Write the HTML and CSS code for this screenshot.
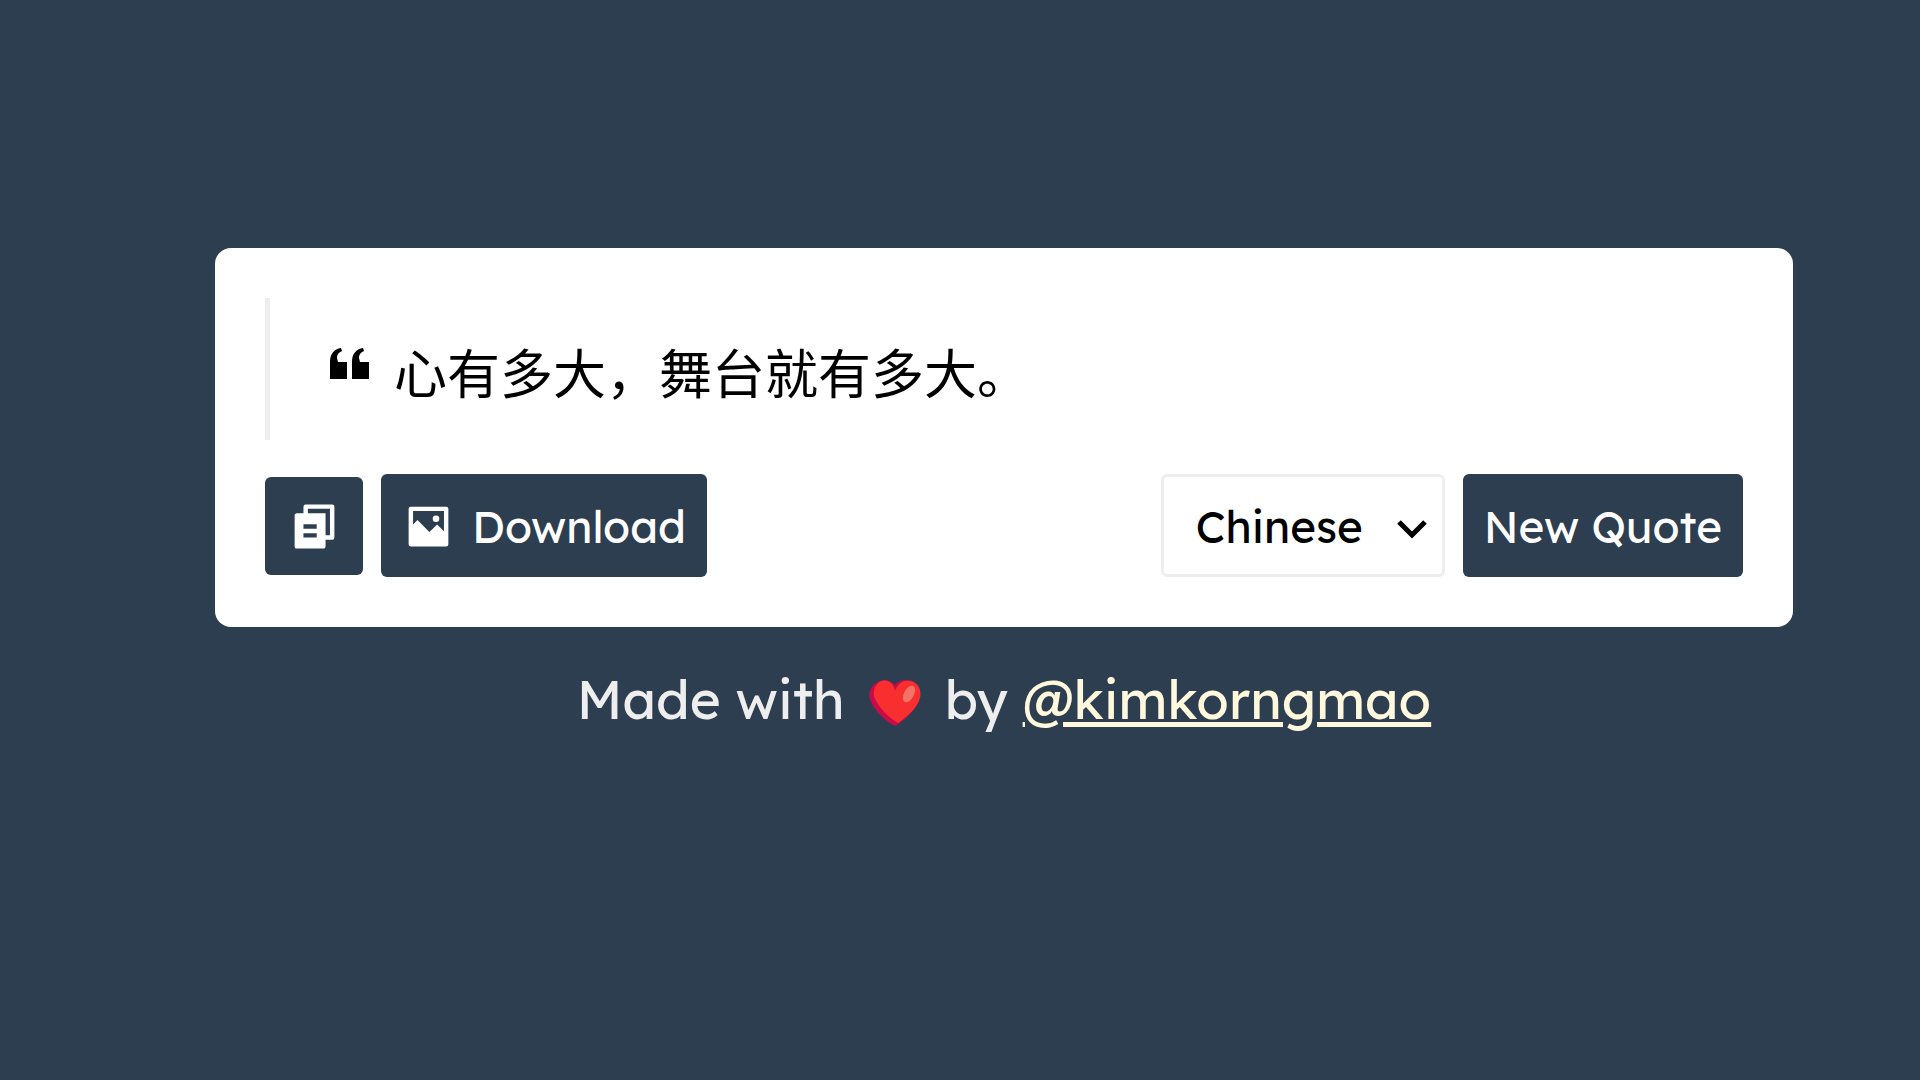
FILE: index.html
```html
<!DOCTYPE html>
<html lang="en">
<head>
  <meta charset="utf-8">
  <meta name="viewport" content="width=device-width, initial-scale=1">
  <title>Quotes</title>
  <link rel="stylesheet" href="styles.css">
</head>
<body>
  <main class="card">
    <blockquote class="quote">
      <svg class="quote-mark" viewBox="0 0 39 31" aria-hidden="true">
        <path d="M0 31V14C0 6 4 1 11 0L12 3C8 5 7 7 7 10L8 14H17V31ZM22 31V14C22 6 26 1 33 0L34 3C30 5 29 7 29 10L30 14H39V31Z"/>
      </svg>
      <p class="quote-text" lang="zh-Hans">心有多大，舞台就有多大。</p>
    </blockquote>
    <div class="toolbar">
      <div class="group">
        <button class="button button-icon" type="button" aria-label="Copy">
          <svg class="icon" viewBox="0 0 24 24" aria-hidden="true">
            <path d="M7 6V3a1 1 0 0 1 1-1h12a1 1 0 0 1 1 1v14a1 1 0 0 1-1 1h-3v3c0 .552-.45 1-1.007 1H4.007A1 1 0 0 1 3 21l.003-14c0-.552.45-1 1.007-1H7zm2 0h8v10h2V4H9v2zm-2 5v2h6v-2H7zm0 4v2h6v-2H7z"/>
          </svg>
        </button>
        <button class="button" type="button">
          <svg class="icon" viewBox="0 0 24 24" aria-hidden="true">
            <path fill-rule="evenodd" d="M4 3h16a1 1 0 0 1 1 1v16a1 1 0 0 1-1 1H4a1 1 0 0 1-1-1V4a1 1 0 0 1 1-1zM5 5v6.1l2-2 5.4 5.4 3.5-3.4 3.1 3V5H5z"/>
            <circle cx="15.4" cy="8.5" r="1.5"/>
          </svg>
          <span>Download</span>
        </button>
      </div>
      <div class="group">
        <div class="picker">
          <select class="picker-select" aria-label="Language">
            <option selected>Chinese</option>
            <option>English</option>
          </select>
          <svg class="picker-arrow" viewBox="0 0 30 19" aria-hidden="true">
            <path d="M2 2L15 15L28 2"/>
          </svg>
        </div>
        <button class="button" type="button">New Quote</button>
      </div>
    </div>
  </main>
  <footer class="footer">
    <span>Made with</span>
    <svg class="heart" viewBox="0 0 52 46" role="img" aria-label="love">
      <path fill="#ca0b4a" d="M26 5C22 0 14-1 9 2C2 5-1 13 1 19C4 29 15 40 24 45Q26 46 28 45C38 38 47 29 50 20C52 12 50 4 43 1C37-1 30 0 26 5Z"/>
      <path fill="#f92f2f" d="M26 11C29 3 35 0 41 1C49 2 53 10 51 18C49 27 38 37 29 43C19 37 8 26 5 16C4 9 7 3 13 1C19-1 25 4 26 11Z"/>
      <ellipse cx="40" cy="14" rx="5" ry="9" fill="#f37366" transform="rotate(28 40 14)"/>
    </svg>
    <span>by <a class="author" href="#">@kimkorngmao</a></span>
  </footer>
</body>
</html>
```
FILE: styles.css
```css
* {
  box-sizing: border-box;
}

body {
  margin: 0;
  padding: 248px 127px 0 215px;
  background: #2d3e50;
  font-family: Lexend, Inter, "Noto Sans CJK SC", sans-serif;
}

.card {
  padding: 50px;
  border-radius: 16px;
  background: #fff;
}

.quote {
  display: flex;
  align-items: center;
  gap: 25px;
  margin: 0 0 34px;
  padding: 40px 60px 36px;
  border-left: 5px solid #eee;
}

.quote-mark {
  width: 39px;
  height: 31px;
  margin-bottom: 16px;
}

.quote-text {
  margin: 0;
  font-family: "Noto Sans CJK SC", sans-serif;
  font-size: 53px;
  font-weight: 400;
  line-height: 66px;
}

.toolbar,
.group {
  display: flex;
  align-items: center;
}

.toolbar {
  justify-content: space-between;
}

.group {
  gap: 18px;
}

.button {
  display: flex;
  align-items: center;
  justify-content: center;
  gap: 17px;
  height: 103px;
  padding: 2px 21px 0;
  border: 0;
  border-radius: 6px;
  background: #2d3e50;
  color: #fff;
  font: 400 44px Lexend, Inter, sans-serif;
  cursor: pointer;
}

.button-icon {
  width: 98px;
  height: 98px;
}

.icon {
  flex: none;
  width: 53px;
  height: 53px;
  fill: currentColor;
}

.picker {
  display: flex;
  position: relative;
}

.picker-select {
  width: 284px;
  height: 103px;
  padding: 2px 32px 0;
  border: 3px solid #eee;
  border-radius: 6px;
  background: #fff;
  color: #000;
  font: 400 44px Lexend, Inter, sans-serif;
  appearance: none;
}

.picker-arrow {
  position: absolute;
  top: 46px;
  right: 18px;
  width: 30px;
  height: 19px;
  fill: none;
  stroke: #000;
  stroke-width: 5px;
  pointer-events: none;
}

.footer {
  display: flex;
  align-items: center;
  justify-content: center;
  gap: 24px;
  padding-top: 39px;
  color: #eee;
  font-size: 53px;
  line-height: 66px;
}

.heart {
  width: 52px;
  height: 46px;
  margin-top: 8px;
}

.author {
  color: #fff8dc;
}
```
